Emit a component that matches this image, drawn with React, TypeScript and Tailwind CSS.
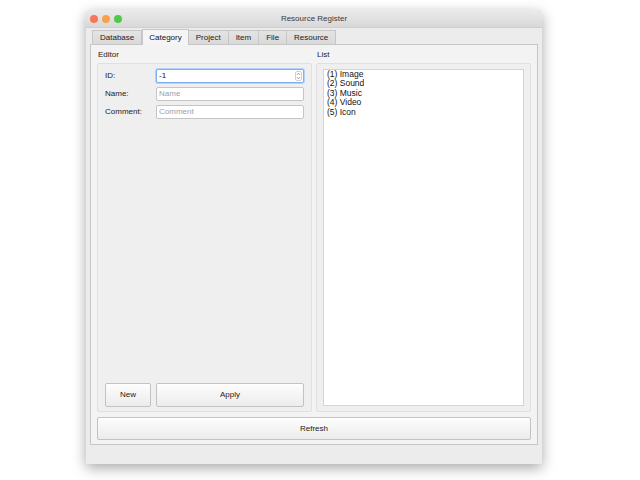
import React from 'react';

const tabs = ['Database', 'Category', 'Project', 'Item', 'File', 'Resource'];
const items = ['(1) Image', '(2) Sound', '(3) Music', '(4) Video', '(5) Icon'];

function Field({ label, value, placeholder, focused }: { label: string; value?: string; placeholder?: string; focused?: boolean }) {
  return (
    <div className="flex h-[14px] items-center">
      <span className="w-[51px] text-[8px] text-[#222]">{label}</span>
      <div
        className={
          focused
            ? 'flex h-[14px] flex-1 items-center rounded-[2px] border border-[#7eaef0] bg-white pl-[2px] shadow-[0_0_0_1px_#b5d3fb]'
            : 'flex h-[14px] flex-1 items-center rounded-[2px] border border-[#c4c4c4] bg-white pl-[2px]'
        }
      >
        {value ? (
          <span className="flex-1 text-[8px] text-[#111]">{value}</span>
        ) : (
          <span className="flex-1 text-[8px] text-[#a0a0a0]">{placeholder}</span>
        )}
        {focused && (
          <div className="mr-[1px] flex h-[10px] w-[7px] flex-col items-center justify-center rounded-[2px] border border-[#d0d0d0] text-[#999]">
            <svg width="5" height="8" viewBox="0 0 5 8">
              <path d="M0.8 3 L2.5 1.2 L4.2 3" fill="none" stroke="#8a8a8a" strokeWidth="0.8" />
              <path d="M0.8 5 L2.5 6.8 L4.2 5" fill="none" stroke="#8a8a8a" strokeWidth="0.8" />
            </svg>
          </div>
        )}
      </div>
    </div>
  );
}

function Button({ label, className }: { label: string; className: string }) {
  return (
    <div
      className={
        'flex items-center justify-center rounded-[2px] border border-[#c3c3c3] bg-gradient-to-b from-[#fdfdfd] to-[#ececec] text-[8px] text-[#222] shadow-[inset_0_1px_0_#fff] ' +
        className
      }
    >
      {label}
    </div>
  );
}

export default function App() {
  return (
    <div className="h-[480px] w-[640px] bg-white pl-[86px] pt-[10px]" style={{ fontFamily: '"Liberation Sans", Arial, sans-serif' }}>
      <div className="flex h-[454px] w-[456px] flex-col rounded-t-[4px] bg-[#ececec] shadow-[0_4px_14px_rgba(0,0,0,0.35)]">
        {/* title bar */}
        <div className="relative flex h-[18px] items-center rounded-t-[4px] border-b border-[#cfcfcf] bg-gradient-to-b from-[#ebebeb] to-[#d8d8d8]">
          <div className="ml-[4px] flex gap-[4px]">
            <span className="h-[8px] w-[8px] rounded-full bg-[#f7755a]" />
            <span className="h-[8px] w-[8px] rounded-full bg-[#f7a24a]" />
            <span className="h-[8px] w-[8px] rounded-full bg-[#4ec94a]" />
          </div>
          <span className="absolute left-0 right-0 text-center text-[8px] text-[#3a3a3a]">Resource Register</span>
        </div>
        {/* body */}
        <div className="flex flex-1 flex-col px-[4px] pb-[19px] pt-[1px]">
          <div className="flex h-[15px] pl-[2px]">
            {tabs.map((t) =>
              t === 'Category' ? (
                <div
                  key={t}
                  className="z-10 -mb-[1px] flex h-[16px] items-center border-x border-t border-[#c6c6c6] bg-[#f5f5f5] px-[6px] text-[8px] text-[#111]"
                >
                  {t}
                </div>
              ) : (
                <div
                  key={t}
                  className="mt-[1px] flex h-[14px] items-center border-r border-t border-[#c6c6c6] bg-gradient-to-b from-[#e4e4e4] to-[#d9d9d9] px-[7px] text-[8px] text-[#222] first:border-l"
                >
                  {t}
                </div>
              )
            )}
          </div>
          <div className="flex flex-1 flex-col border border-[#c6c6c6] bg-[#f3f3f3] px-[6px] pb-[4px] pt-[2px]">
            <div className="flex flex-1 gap-[4px]">
              {/* editor */}
              <div className="flex w-[215px] flex-col">
                <div className="flex h-[16px] items-center pl-[1px] text-[8px] text-[#222]">Editor</div>
                <div className="flex flex-1 flex-col rounded-[2px] border border-[#e0e0e0] bg-[#efefef] px-[7px] pb-[4px] pt-[5px]">
                  <div className="flex flex-col gap-[4px]">
                    <Field label="ID:" value="-1" focused />
                    <Field label="Name:" placeholder="Name" />
                    <Field label="Comment:" placeholder="Comment" />
                  </div>
                  <div className="mt-auto flex gap-[5px]">
                    <Button label="New" className="h-[24px] w-[46px]" />
                    <Button label="Apply" className="h-[24px] flex-1" />
                  </div>
                </div>
              </div>
              {/* list */}
              <div className="flex flex-1 flex-col">
                <div className="flex h-[16px] items-center pl-[1px] text-[8px] text-[#222]">List</div>
                <div className="flex flex-1 flex-col rounded-[2px] border border-[#e0e0e0] bg-[#efefef] px-[6px] pb-[5px] pt-[5px]">
                  <div className="flex-1 border border-[#d4d4d4] bg-white pl-[3px] pt-0">
                    {items.map((i) => (
                      <div key={i} className="h-[9.4px] text-[8.5px] leading-[9.4px] text-[#111]">
                        {i}
                      </div>
                    ))}
                  </div>
                </div>
              </div>
            </div>
            <Button label="Refresh" className="mt-[5px] h-[23px] w-full" />
          </div>
        </div>
      </div>
    </div>
  );
}
